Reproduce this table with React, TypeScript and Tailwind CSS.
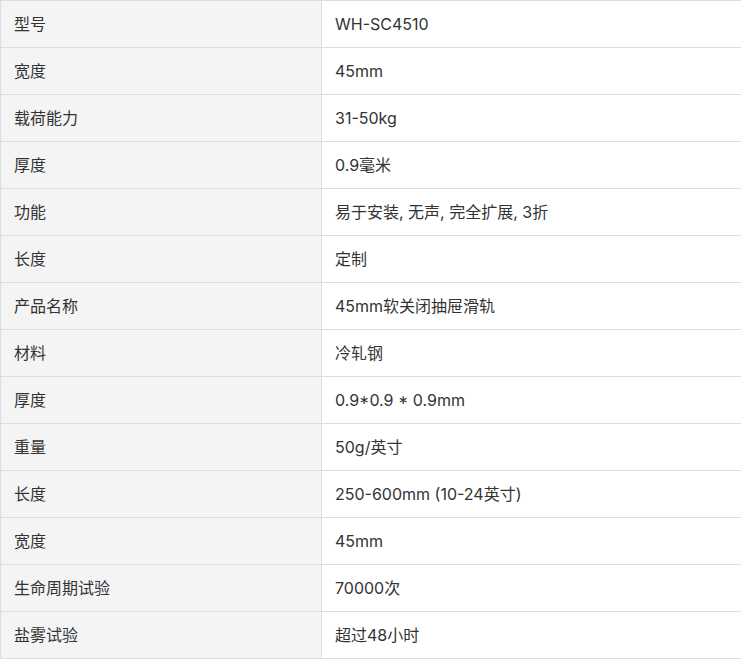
import React from "react";

const rows: [string, string][] = [
  ["型号", "WH-SC4510"],
  ["宽度", "45mm"],
  ["载荷能力", "31-50kg"],
  ["厚度", "0.9毫米"],
  ["功能", "易于安装, 无声, 完全扩展, 3折"],
  ["长度", "定制"],
  ["产品名称", "45mm软关闭抽屉滑轨"],
  ["材料", "冷轧钢"],
  ["厚度", "0.9*0.9 * 0.9mm"],
  ["重量", "50g/英寸"],
  ["长度", "250-600mm (10-24英寸)"],
  ["宽度", "45mm"],
  ["生命周期试验", "70000次"],
  ["盐雾试验", "超过48小时"],
];

export default function App() {
  return (
    <div
      className="w-[742px] bg-white text-[16px] text-[#333333]"
      style={{ fontFamily: 'Inter, "Noto Sans CJK SC", sans-serif' }}
    >
      <div className="border-t border-l border-[#dddddd]">
        {rows.map(([k, v], i) => (
          <div key={i} className="flex h-[47px] border-b border-[#dddddd]">
            <div className="w-[321px] shrink-0 flex items-center pl-[13px] bg-[#f4f4f4] border-r border-[#dddddd]">
              {k}
            </div>
            <div className="flex-1 flex items-center pl-[13px]">{v}</div>
          </div>
        ))}
      </div>
    </div>
  );
}
